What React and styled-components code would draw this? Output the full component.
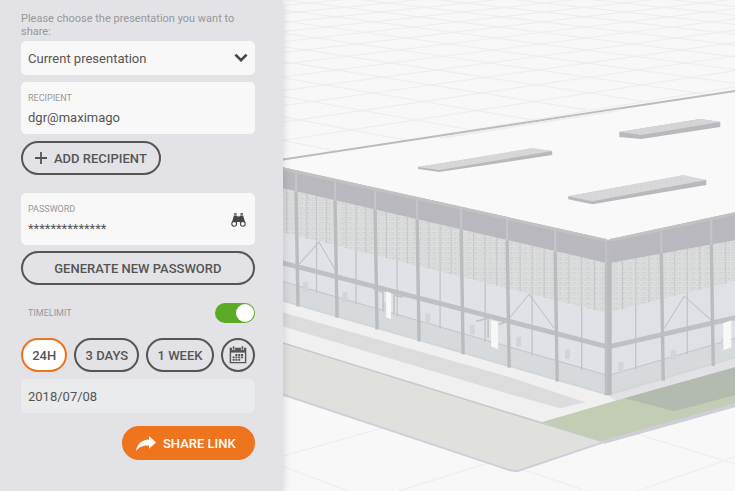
import { useState } from "react";
import styled, { createGlobalStyle } from "styled-components";

export default function App() {
  const [range, setRange] = useState("24H");
  const [limited, setLimited] = useState(true);

  return (
    <Page>
      <GlobalStyle />
      <Panel>
        <Choice>
          <Hint htmlFor="presentation">
            Please choose the presentation you want to share:
          </Hint>
          <SelectBox>
            <Select id="presentation">
              <option>Current presentation</option>
            </Select>
            <ChevronIcon />
          </SelectBox>
        </Choice>
        <Field>
          <FieldText>
            <Label htmlFor="recipient">RECIPIENT</Label>
            <Input id="recipient" defaultValue="dgr@maximago" />
          </FieldText>
        </Field>
        <AddButton type="button">
          <PlusIcon />
          ADD RECIPIENT
        </AddButton>
        <Group>
          <Field>
            <FieldText>
              <Label htmlFor="password">PASSWORD</Label>
              <Input id="password" defaultValue="**************" />
            </FieldText>
            <IconButton type="button" aria-label="Show password">
              <BinocularsIcon />
            </IconButton>
          </Field>
          <Button type="button">GENERATE NEW PASSWORD</Button>
        </Group>
        <Group>
          <ToggleRow>
            <Label htmlFor="timelimit">TIMELIMIT</Label>
            <Toggle
              id="timelimit"
              type="checkbox"
              checked={limited}
              onChange={() => setLimited(!limited)}
            />
          </ToggleRow>
        </Group>
        <Ranges>
          {["24H", "3 DAYS", "1 WEEK"].map((name) => (
            <Pill
              key={name}
              type="button"
              $active={range === name}
              onClick={() => setRange(name)}
            >
              {name}
            </Pill>
          ))}
          <RoundButton type="button" aria-label="Pick a date">
            <CalendarIcon />
          </RoundButton>
        </Ranges>
        <DateInput aria-label="Expiry date" defaultValue="2018/07/08" />
        <ShareButton type="button">
          <ShareIcon />
          SHARE LINK
        </ShareButton>
      </Panel>
      <Stage>
        <Building />
      </Stage>
    </Page>
  );
}

function ChevronIcon() {
  return (
    <Chevron width="14" height="10" viewBox="0 0 14 10">
      <path d="M1.4 1.6 7 7.2l5.6-5.6" fill="none" stroke="#454545" strokeWidth="2.6" />
    </Chevron>
  );
}

function PlusIcon() {
  return (
    <svg width="12" height="12" viewBox="0 0 12 12">
      <path d="M6 0v12M0 6h12" stroke="#555" strokeWidth="1.8" />
    </svg>
  );
}

function BinocularsIcon() {
  return (
    <svg width="15" height="14" viewBox="0 0 15 14">
      <path
        d="M3 .3h2.6v1.5H3zM9.4.3H12v1.5H9.4zM2.8 2.4h3.1l.7 1h1.8l.7-1h3.1l1.9 7.4H9.3L8.7 9H6.3l-.6.8H.9z"
        fill="#454545"
      />
      <circle cx="3.2" cy="10.8" r="2.4" fill="#f8f8f8" stroke="#454545" strokeWidth="1.1" />
      <circle cx="11.8" cy="10.8" r="2.4" fill="#f8f8f8" stroke="#454545" strokeWidth="1.1" />
    </svg>
  );
}

function CalendarIcon() {
  return (
    <svg width="18" height="18" viewBox="0 0 18 18">
      <path d="M1.4 2.4h15.2v14.2H1.4z" fill="none" stroke="#555" strokeWidth="1.4" />
      <path d="M1 2h16v4.6H1z" fill="#555" />
      <path d="M4.6 0v4M13.4 0v4" stroke="#e3e2e7" strokeWidth="3" />
      <path d="M4.6.3v3.2M13.4.3v3.2" stroke="#555" strokeWidth="1.6" />
      <path
        d="M6.4 9h8.4M3.6 11.4h11.2M3.6 13.8h8.4"
        stroke="#555"
        strokeWidth="1.8"
        strokeDasharray="2 .8"
      />
    </svg>
  );
}

function ShareIcon() {
  return (
    <svg width="20" height="15" viewBox="0 0 20 15">
      <path d="M13 0l7 6.6-7 6.2V9.5C7.6 9.2 3.4 10.6 0 15 1 8.3 5.6 3.8 13 3.5z" fill="#fff" />
    </svg>
  );
}

// Heights of the facade edges at the two ends of each visible side
const SIDES = [
  {
    x: [282, 607],
    roof: [167, 239],
    fascia: [188, 263],
    mesh: [232, 313],
    beam: [260, 344],
    base: [301, 395],
    stops: [256, 297, 336, 376, 418, 462, 508, 556, 607],
    glass: "#dfe3e7",
  },
  {
    x: [609, 735],
    roof: [239, 212],
    fascia: [263, 240],
    mesh: [312, 281],
    beam: [344, 315],
    base: [395, 358],
    stops: [609, 662, 712, 764],
    glass: "#dee1e6",
  },
];

function at(side, edge, x) {
  const t = (x - side.x[0]) / (side.x[1] - side.x[0]);
  return side[edge][0] + t * (side[edge][1] - side[edge][0]);
}

function band(side, from, to, offsetFrom = 0, offsetTo = 0) {
  const [a, b] = side.x;
  const [ta, tb] = side[from];
  const [ba, bb] = side[to];
  return `${a},${ta + offsetFrom} ${b},${tb + offsetFrom} ${b},${bb + offsetTo} ${a},${ba + offsetTo}`;
}

function Facade({ side }) {
  const bays = side.stops.slice(1).map((end, i) => [side.stops[i], end]);
  const columns = side.stops.slice(1, -1);

  return (
    <g>
      <polygon points={band(side, "mesh", "base")} fill={side.glass} />
      <polygon points={band(side, "base", "base", -20, 0)} fill="#d6dadd" />
      <polygon points={band(side, "fascia", "mesh")} fill="#d3d5d6" />
      <polygon points={band(side, "fascia", "mesh")} fill="url(#mesh)" />
      {bays.map(([a, b]) =>
        [0.25, 0.5, 0.75].map((t) => {
          const x = a + (b - a) * t;
          return (
            <g key={x} stroke="#bfc2c4">
              <path d={`M${x} ${at(side, "fascia", x)}V${at(side, "mesh", x)}`} strokeWidth=".8" />
              {t === 0.5 && (
                <path d={`M${x} ${at(side, "mesh", x)}V${at(side, "base", x) - 18}`} strokeWidth="1.2" />
              )}
            </g>
          );
        })
      )}
      {bays.map(([a, b]) => (
        <g key={a}>
          <path
            d={`M${a} ${at(side, "base", a) - 20}L${b} ${at(side, "base", b) - 20}`}
            stroke="#bdc1c5"
            strokeWidth=".9"
          />
          <path
            d={`M${a + (b - a) * 0.22} ${at(side, "beam", a) + 18}v10`}
            stroke="#d3d4da"
            strokeWidth="5"
          />
        </g>
      ))}
      <polygon points={band(side, "roof", "fascia")} fill="#b9b8bf" />
      <polygon points={band(side, "roof", "roof", 0, 3)} fill="#c2c2c3" />
      <polygon points={band(side, "beam", "beam", 0, 5)} fill="#bfc0c3" />
      <polygon points={band(side, "base", "base", -2, 0)} fill="#d3d6d9" />
      {columns.map((x) => (
        <g key={x}>
          <path d={`M${x - 1} ${at(side, "roof", x) + 1}V${at(side, "fascia", x)}`} stroke="#c5c5c5" strokeWidth="2" />
          <path
            d={`M${x - 1} ${at(side, "fascia", x)}L${x + 1} ${at(side, "base", x) + 1}`}
            stroke="#babcbe"
            strokeWidth="3.4"
          />
        </g>
      ))}
    </g>
  );
}

// Floor grid: two sets of lines, each meeting in its own point on the horizon
function Floor() {
  const steps = Array.from({ length: 60 }, (_, i) => i - 30);
  return (
    <g stroke="#eeeeee" strokeWidth="1.2">
      {steps.map((k) => {
        const x = 373 + 108 * k;
        return (
          <g key={k}>
            <path d={`M-1580 -236L${-1580 + (x + 1580) * 3} 751`} />
            <path d={`M2720 -236L${2720 + (x - 2720) * 3} 751`} />
          </g>
        );
      })}
    </g>
  );
}

function Building() {
  return (
    <Scene viewBox="283 0 452 491" preserveAspectRatio="xMinYMin slice" role="img" aria-label="Building model">
      <defs>
        <pattern id="mesh" width="7" height="5" patternUnits="userSpaceOnUse">
          <path d="M0 1.5l2-1 2 1.5 3-1M1 4l2-.8 2 1.2 2-.6" fill="none" stroke="#e3e5e4" strokeWidth=".9" />
          <path d="M0 3l1.500-.7M4 3.200l2-.8" stroke="#c6c9c9" strokeWidth=".6" />
        </pattern>
        <pattern id="speckle" width="5" height="4" patternUnits="userSpaceOnUse">
          <path d="M0 1h1M3 2h1M1 3.500h1" stroke="#c9c9cd" strokeWidth=".8" />
        </pattern>
      </defs>
      <rect x="282" width="453" height="491" fill="#f8f8f8" />
      <Floor />

      <polygon points="282,159 735,90 735,212 608,239 282,167" fill="#f9f9f9" />
      <path d="M282 159.5L510 125L735 91" stroke="#bcbcbc" strokeWidth="2" fill="none" />
      <path d="M440 138L620 110" stroke="#ececf1" strokeWidth="2" />

      <polygon points="418,167 532,149 552,151 552,155 439,172 418,169" fill="#b9b9bb" />
      <polygon points="418,167 532,148 552,151 439,170" fill="#d9d9db" />
      <polygon points="418,167 532,148 552,151 439,170" fill="url(#speckle)" />
      <polygon points="619,132 700,119 720,122 720,127 641,139 619,137" fill="#b9b9bd" />
      <polygon points="619,132 700,119 720,122 641,135" fill="#d6d6d8" />
      <polygon points="619,132 700,119 720,122 641,135" fill="url(#speckle)" />
      <polygon points="568,196 683,176 706,180 706,185 592,204 568,199" fill="#b9b9bd" />
      <polygon points="568,196 683,175 706,180 592,201" fill="#d9d9db" />
      <polygon points="568,196 683,175 706,180 592,201" fill="url(#speckle)" />

      <polygon points="282,301 607,395 622,399 541,422 282,342" fill="#f0f0f0" />
      <polygon points="282,312 510,377 585,402 560,408 510,394 282,326" fill="#dcdcdd" />
      <polygon points="282,342 510,412 542,422 603,441 517,471 510,470 282,394" fill="#e0e0dd" />
      <path d="M282 342.5L510 413L603 441.5" stroke="#c8c8ce" strokeWidth="1.5" fill="none" />
      <path d="M282 394L510 470L517 471L603 442" stroke="#d0cfd9" strokeWidth="2" fill="none" />
      <polygon points="607,395 735,357 735,369 617,401" fill="#e2e2e6" />
      <polygon points="541,422 617,400 735,367 735,404 602,441" fill="#c3cdb5" />
      <polygon points="624,398 735,367 735,395 674,411" fill="#b3bbb1" />
      <path d="M603 442L735 405" stroke="#cfced8" strokeWidth="3.5" />

      {SIDES.map((side) => (
        <Facade key={side.x[0]} side={side} />
      ))}

      <g stroke="#bfc1c4" fill="none">
        <path d="M299 264L319 242L336 271M510 317L529 294L554 328M664 328L684 296L711 320" strokeWidth="1" />
        <path d="M383 311V292L374 289M394 313V295L403 297M488 338V318L476 321M493 345V326L505 322" strokeWidth="1.5" />
      </g>
      <polygon points="386,291 391,293 391,319 386,317" fill="#f8f8f9" />
      <polygon points="491,320 498,322 498,349 491,346" fill="#f8f8f9" />
      <polygon points="723,323 731,320 731,347 723,350" fill="#f8f8f9" />
      <path d="M608 240V395" stroke="#b9babd" strokeWidth="7" />
      <path d="M606 240V393" stroke="#c3c4c6" strokeWidth="1.5" />
    </Scene>
  );
}

const GlobalStyle = createGlobalStyle`
  * {
    box-sizing: border-box;
  }

  body {
    margin: 0;
    background: #f8f8f8;
    font-family: Roboto, "Liberation Sans", sans-serif;
    color: #555;
  }

  button, input, select {
    font: inherit;
    color: inherit;
    margin: 0;
  }
`;

const Page = styled.div`
  display: grid;
  grid-template-columns: minmax(0, 5fr) minmax(0, 8fr);
  min-height: 100vh;
`;

const Panel = styled.form`
  z-index: 1;
  display: flex;
  flex-direction: column;
  gap: 7px;
  padding: 12px 28px 24px 21px;
  background: #e3e2e7;
  box-shadow: 0 0 8px rgba(60, 60, 80, 0.2);
`;

const Choice = styled.div`
  display: flex;
  flex-direction: column;
  gap: 3px;
`;

const Hint = styled.label`
  font-size: 11px;
  line-height: 13px;
  color: #98989a;
`;

const SelectBox = styled.div`
  display: grid;
  align-items: center;
`;

const Select = styled.select`
  grid-area: 1 / 1;
  width: 100%;
  height: 34px;
  padding: 0 32px 0 7px;
  border: 0;
  border-radius: 5px;
  background: #f8f8f8;
  font-size: 13px;
  appearance: none;
`;

const Chevron = styled.svg`
  grid-area: 1 / 1;
  justify-self: end;
  margin-right: 7px;
  pointer-events: none;
`;

const Field = styled.div`
  display: flex;
  align-items: center;
  justify-content: space-between;
  height: 52px;
  padding: 2px 9px 0 7px;
  border-radius: 5px;
  background: #f8f8f8;
`;

const FieldText = styled.div`
  display: flex;
  flex: 1;
  flex-direction: column;
  min-width: 0;
  gap: 2px;
`;

const Label = styled.label`
  font-size: 9px;
  line-height: 14px;
  color: #98989a;
`;

const Input = styled.input`
  width: 100%;
  height: 20px;
  padding: 0;
  border: 0;
  background: none;
  font-size: 13px;
`;

const IconButton = styled.button`
  display: flex;
  padding: 0;
  border: 0;
  background: none;
`;

const Button = styled.button`
  display: flex;
  align-items: center;
  justify-content: center;
  gap: 7px;
  height: 34px;
  padding: 0 12px;
  border: 2px solid #555;
  border-radius: 17px;
  background: none;
  font-size: 13px;
  font-weight: 500;
  white-space: nowrap;
`;

const AddButton = styled(Button)`
  align-self: flex-start;
`;

const Group = styled.div`
  display: flex;
  flex-direction: column;
  gap: 6px;
  margin-top: 11px;
`;

const ToggleRow = styled.div`
  display: flex;
  align-items: center;
  justify-content: space-between;
  padding-left: 7px;
`;

const Toggle = styled.input`
  width: 40px;
  height: 20px;
  padding: 1px;
  border-radius: 10px;
  background: ${({ checked }) => (checked ? "#5cab26" : "#a9a9ad")};
  appearance: none;

  &::before {
    content: "";
    display: block;
    width: 18px;
    height: 18px;
    margin-left: ${({ checked }) => (checked ? "auto" : "0")};
    border-radius: 50%;
    background: #fff;
  }
`;

const Ranges = styled.div`
  display: flex;
  gap: 7px;
  margin-top: 8px;
`;

const Pill = styled(Button)`
  flex: 1 1 auto;
  padding: 0 8px;
  border-color: ${({ $active }) => ($active ? "#ee741d" : "#555")};
  background: ${({ $active }) => ($active ? "#fff" : "none")};
`;

const RoundButton = styled(Button)`
  flex: none;
  width: 34px;
  padding: 0;
`;

const DateInput = styled.input`
  width: 100%;
  height: 34px;
  padding: 0 7px;
  border: 0;
  border-radius: 5px;
  background: #e9ebed;
  font-size: 13px;
`;

const ShareButton = styled(Button)`
  align-self: flex-end;
  margin-top: 6px;
  padding: 0 17px 0 12px;
  border-color: #ee741d;
  background: #ee741d;
  color: #fff;
`;

const Stage = styled.main`
  display: grid;
  overflow: hidden;
`;

const Scene = styled.svg`
  display: block;
  width: 100%;
  height: 100%;
`;
